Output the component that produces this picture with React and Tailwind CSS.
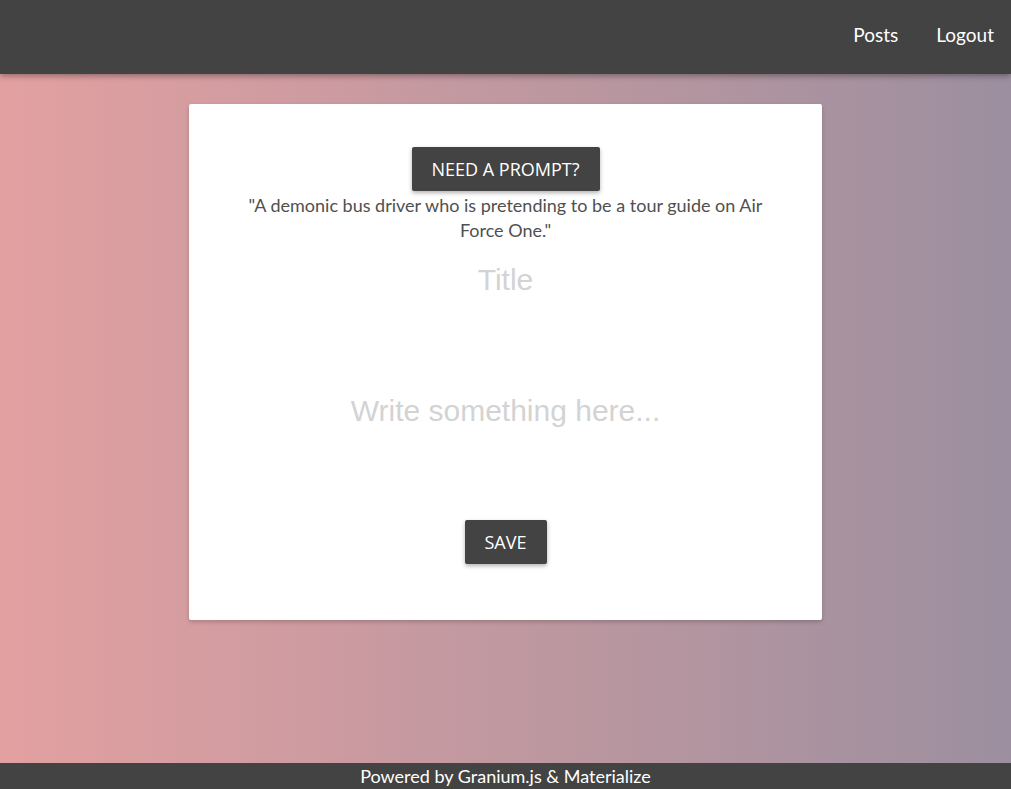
import React from "react";

export default function App() {
  return (
    <div className="min-h-screen flex flex-col bg-gradient-to-r from-[#e3a0a0] to-[#9c8f9f] font-['Lato',sans-serif]">
      {/* Nav */}
      <nav className="relative z-10 h-[74px] bg-[#434343] shadow-[0_2px_6px_rgba(0,0,0,0.35)] flex items-center justify-end pr-[17px] pb-[4px]">
        <a className="text-white text-[19px] px-[19px] cursor-pointer">Posts</a>
        <a className="text-white text-[19px] pl-[19px] cursor-pointer">Logout</a>
      </nav>

      {/* Main */}
      <main className="flex-1 pt-[30px]">
        <div className="mx-auto w-[633px] h-[516px] bg-white rounded-[2px] shadow-[0_2px_4px_rgba(0,0,0,0.2)] flex flex-col items-center pt-[43px]">
          <button className="h-[44px] px-5 bg-[#434343] text-white text-[18px] uppercase rounded-[2px] shadow-[0_2px_4px_rgba(0,0,0,0.3)] font-['Open_Sans',sans-serif]">
            Need a prompt?
          </button>
          <p className="mt-[2px] px-[55px] text-center text-[18px] leading-[25px] text-[#505050]">
            "A demonic bus driver who is pretending to be a tour guide on Air Force One."
          </p>
          <input
            className="mt-[7px] w-full h-[60px] text-center text-[30px] font-['Liberation_Sans',sans-serif] outline-none placeholder:text-[#d3d3d3]"
            placeholder="Title"
          />
          <textarea
            className="w-full h-[180px] pt-[84px] resize-none text-center text-[30px] leading-[34px] font-['Liberation_Sans',sans-serif] outline-none placeholder:text-[#d3d3d3]"
            placeholder="Write something here..."
          />
          <button className="mt-[30px] h-[44px] px-5 bg-[#434343] text-white text-[18px] uppercase rounded-[2px] shadow-[0_2px_4px_rgba(0,0,0,0.3)] font-['Open_Sans',sans-serif]">
            Save
          </button>
        </div>
      </main>

      {/* Footer */}
      <footer className="h-[26px] bg-[#434343] text-white text-center text-[18px] leading-[26px]">
        Powered by Granium.js &amp; Materialize
      </footer>
    </div>
  );
}
